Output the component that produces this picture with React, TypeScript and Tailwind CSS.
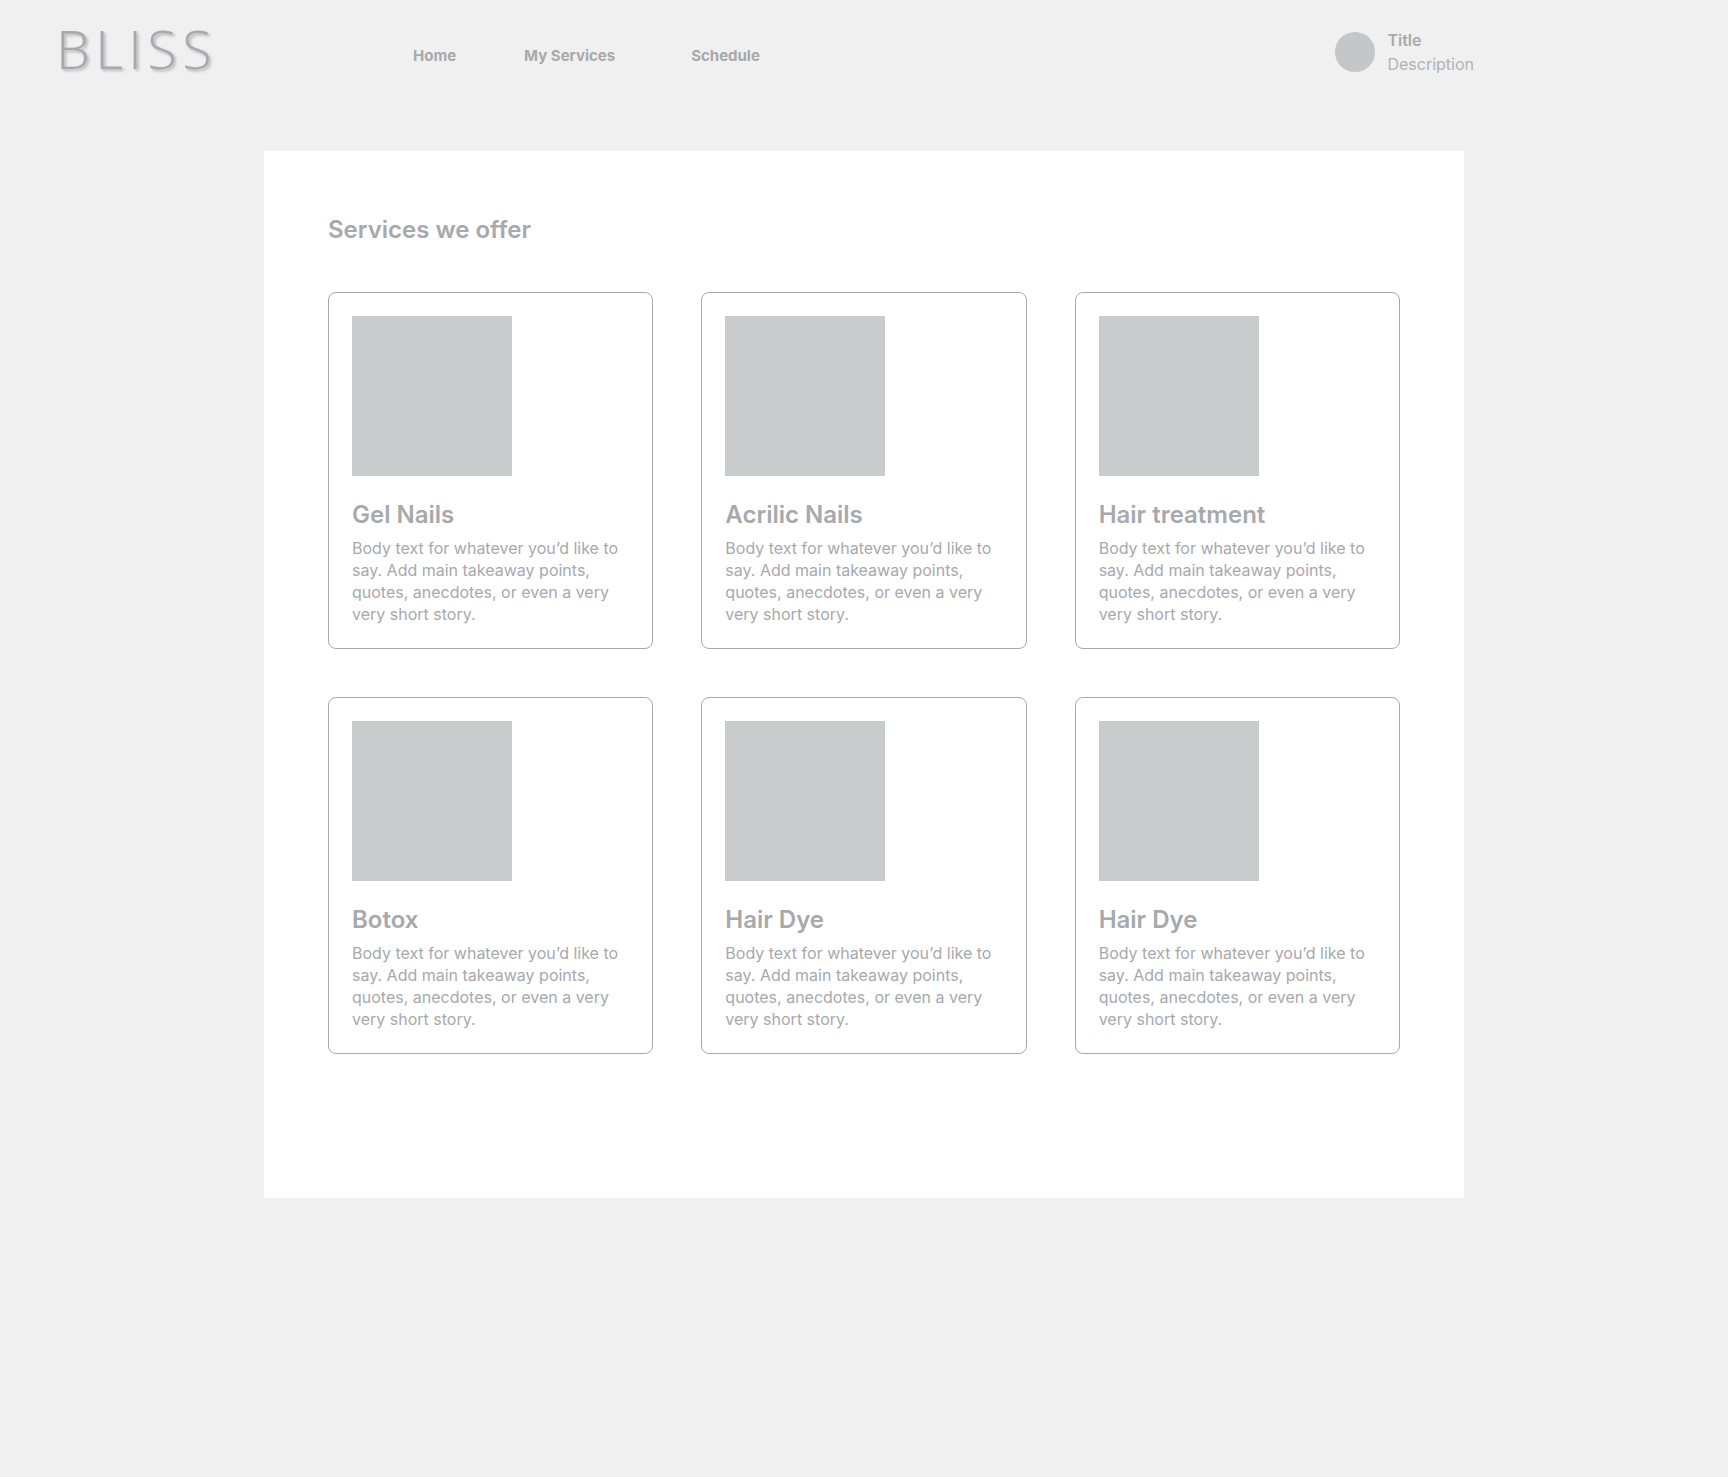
const BODY =
  "Body text for whatever you’d like to say. Add main takeaway points, quotes, anecdotes, or even a very very short story.";

const services = [
  { id: "gel-nails", name: "Gel Nails" },
  { id: "acrilic-nails", name: "Acrilic Nails" },
  { id: "hair-treatment", name: "Hair treatment" },
  { id: "botox", name: "Botox" },
  { id: "hair-dye-1", name: "Hair Dye" },
  { id: "hair-dye-2", name: "Hair Dye" },
];

function Header() {
  return (
    <header className="flex h-[103px] items-center pr-4 pl-14 lg:pr-[254px]">
      <a
        href="#"
        className="pb-2 font-['Open_Sans'] text-[54px] leading-[56px] font-light tracking-widest text-[#a7a9ac] [text-shadow:2px_2px_3px_rgba(0,0,0,0.25)]"
      >
        BLISS
      </a>
      <nav className="ml-49 flex items-center pt-2 text-[15px] leading-5 font-bold">
        <a href="#" className="mr-17">Home</a>
        <a href="#" className="mr-19">My Services</a>
        <a href="#">Schedule</a>
      </nav>
      <div className="ml-auto flex items-center gap-3">
        <div className="size-10 rounded-full bg-[#c4c6c8]" />
        <div className="flex flex-col gap-0.5 text-base leading-[22px]">
          <p className="font-semibold">Title</p>
          <p className="text-[#b0b2b5]">Description</p>
        </div>
      </div>
    </header>
  );
}

function ServiceCard({ name }: { name: string }) {
  return (
    <article className="rounded-lg border border-[#a7a9ac] p-[23px]">
      <div className="size-40 bg-[#c9cbcd]" />
      <h2 className="mt-6 text-2xl leading-[29px] font-semibold">{name}</h2>
      <p className="mt-2 text-base leading-[22px]">{BODY}</p>
    </article>
  );
}

export default function App() {
  return (
    <div className="min-h-screen bg-[#f0f0f0] font-[Inter,sans-serif] text-[#a7a9ac]">
      <Header />
      <main className="mx-auto mt-12 max-w-[1200px] bg-white px-16 pt-16 pb-36">
        <h1 className="text-2xl leading-[29px] font-semibold">Services we offer</h1>
        <div className="mt-12 grid grid-cols-1 gap-12 md:grid-cols-2 lg:grid-cols-3">
          {services.map((s) => (
            <ServiceCard key={s.id} name={s.name} />
          ))}
        </div>
      </main>
    </div>
  );
}
